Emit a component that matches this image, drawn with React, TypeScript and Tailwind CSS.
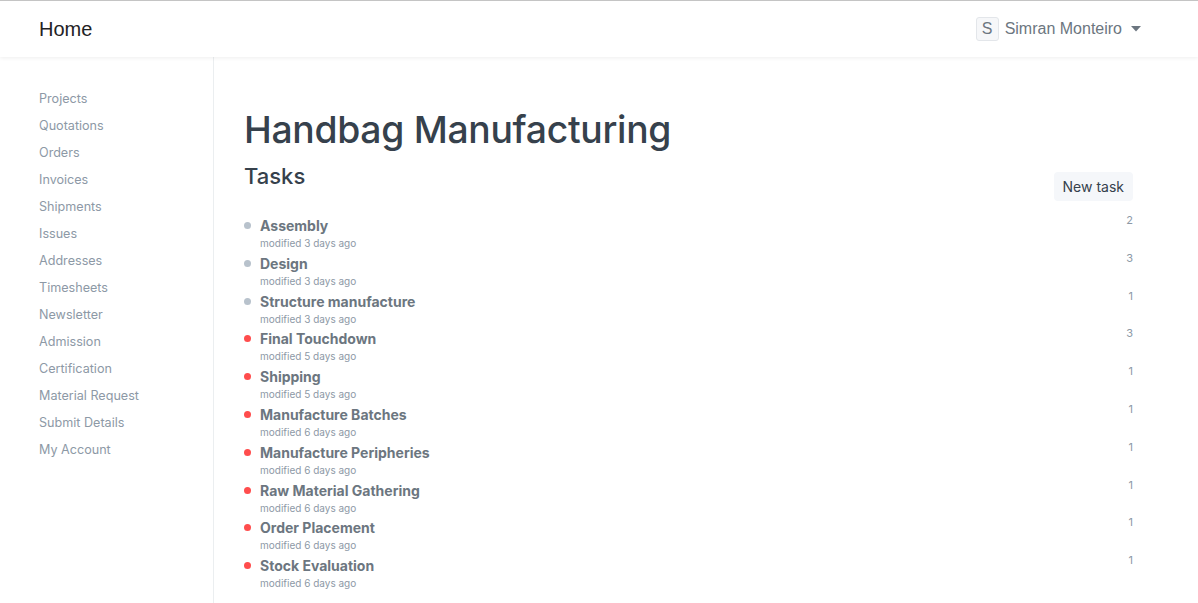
const sidebarItems = [
  "Projects",
  "Quotations",
  "Orders",
  "Invoices",
  "Shipments",
  "Issues",
  "Addresses",
  "Timesheets",
  "Newsletter",
  "Admission",
  "Certification",
  "Material Request",
  "Submit Details",
  "My Account",
];

type Task = { name: string; modified: string; count: number; open: boolean };

const tasks: Task[] = [
  { name: "Assembly", modified: "modified 3 days ago", count: 2, open: false },
  { name: "Design", modified: "modified 3 days ago", count: 3, open: false },
  { name: "Structure manufacture", modified: "modified 3 days ago", count: 1, open: false },
  { name: "Final Touchdown", modified: "modified 5 days ago", count: 3, open: true },
  { name: "Shipping", modified: "modified 5 days ago", count: 1, open: true },
  { name: "Manufacture Batches", modified: "modified 6 days ago", count: 1, open: true },
  { name: "Manufacture Peripheries", modified: "modified 6 days ago", count: 1, open: true },
  { name: "Raw Material Gathering", modified: "modified 6 days ago", count: 1, open: true },
  { name: "Order Placement", modified: "modified 6 days ago", count: 1, open: true },
  { name: "Stock Evaluation", modified: "modified 6 days ago", count: 1, open: true },
];

function Navbar() {
  return (
    <header className="relative z-10 h-[57px] shrink-0 border-t border-[#c4c4c4] bg-white shadow-[0_1px_4px_rgba(0,0,0,0.07)] flex items-center justify-between pl-[39px] pr-[57px] font-['Liberation_Sans',Arial,sans-serif]">
      <span className="text-[20px] text-[#1f2225] leading-none">Home</span>
      <div className="flex items-center">
        <span className="w-[23px] h-[24px] rounded-[3px] border border-[#e3e6ea] bg-[#f6f7f9] flex items-center justify-center text-[16px] text-[#6c7680]">
          S
        </span>
        <span className="ml-[6px] text-[16px] text-[#6c7680]">Simran Monteiro</span>
        <svg className="ml-[9px]" width="10" height="6" viewBox="0 0 10 6">
          <path d="M0 0h10L5 5.5z" fill="#6c7680" />
        </svg>
      </div>
    </header>
  );
}

function Sidebar() {
  return (
    <aside className="w-[214px] shrink-0 border-r border-[#ebeef0] pt-[28px] pl-[39px]">
      <ul>
        {sidebarItems.map((item) => (
          <li key={item} className="text-[12.6px] leading-[27px] text-[#8d99a6]">
            {item}
          </li>
        ))}
      </ul>
    </aside>
  );
}

function TaskRow({ task }: { task: Task }) {
  return (
    <div className="h-[37.8px] flex justify-between">
      <div className="flex">
        <span
          className={
            "mt-[5px] w-[7px] h-[7px] rounded-full " +
            (task.open ? "bg-[#ff4d4d]" : "bg-[#b8c2cc]")
          }
        />
        <div className="ml-[9px]">
          <div className="text-[14px] leading-[17px] font-bold text-[#6c7680]">{task.name}</div>
          <div className="text-[10px] leading-[19px] text-[#8d99a6]">{task.modified}</div>
        </div>
      </div>
      <span className="mt-[-3px] text-[11px] leading-[12px] text-[#8d99a6]">{task.count}</span>
    </div>
  );
}

export default function App() {
  return (
    <div className="h-screen flex flex-col bg-white font-['Inter',sans-serif] overflow-hidden">
      <Navbar />
      <div className="flex flex-1">
        <Sidebar />
        <main className="flex-1 pt-[49px] pl-[30px] pr-[65px]">
          <h1 className="text-[37.3px] leading-[48px] font-medium tracking-[-0.3px] text-[#36414c]">
            Handbag Manufacturing
          </h1>
          <div className="mt-[7px] flex items-end justify-between">
            <h3 className="mb-[10px] text-[22px] leading-[30px] font-medium text-[#36414c]">Tasks</h3>
            <button className="h-[29px] px-[9px] rounded-[4px] bg-[#f5f7fa] text-[14px] text-[#36414c]">
              New task
            </button>
          </div>
          <div className="mt-[16px]">
            {tasks.map((t) => (
              <TaskRow key={t.name} task={t} />
            ))}
          </div>
        </main>
      </div>
    </div>
  );
}
